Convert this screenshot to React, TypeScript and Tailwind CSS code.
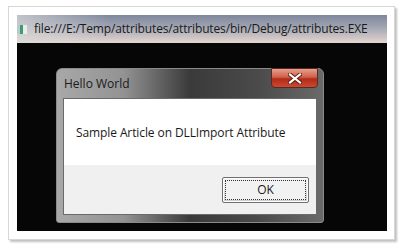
import React from "react";

export default function App() {
  const seg = { fontFamily: '"Open Sans", "Noto Sans", "Liberation Sans", sans-serif' };
  return (
    <div className="w-[403px] h-[249px] bg-white pt-[6px] pl-[8px]" style={seg}>
      <div className="w-[387px] h-[234px] border border-[#d6d6d6] bg-white pt-[8px] pl-[8px] shadow-[2px_2px_2px_rgba(0,0,0,0.25)]">
        <div className="w-[370px] h-[216px] flex flex-col bg-[#060606]">
          {/* console title bar */}
          <div className="h-[28px] flex items-center bg-[linear-gradient(to_bottom,#7d879c_0%,#a3a6b3_45%,#e4d6cf_100%)] relative">
            <div className="absolute inset-0 bg-[linear-gradient(to_right,rgba(220,220,220,0.7)_0%,rgba(220,220,220,0)_25%)]" />
            <div className="relative flex items-center">
              <div className="flex shrink-0 mt-[1px]">
                <div className="w-[3px] h-[9px] bg-[#b8c8d4]" />
                <div className="w-[3px] h-[9px] bg-[#3aa06a]" />
                <div className="w-[4px] h-[9px] bg-[#ececec]" />
              </div>
              <span className="ml-[7px] text-[12px] text-[#1a1a1a] tracking-[-0.15px] leading-none">
                file:///E:/Temp/attributes/attributes/bin/Debug/attributes.EXE
              </span>
            </div>
          </div>
          {/* console body */}
          <div className="flex-1 pl-[39px] pt-[25px]">
            <div className="w-[268px] h-[155px] rounded-t-[6px] rounded-b-[3px] border border-[#8a8a8a] bg-[linear-gradient(to_right,#a8a8a8_0%,#939393_25%,#3a3a3a_50%,#4a4a4a_75%,#6a6a6a_100%)] flex flex-col relative">
              {/* title */}
              <div className="h-[29px] flex items-start relative">
                <span className="ml-[7px] mt-[9px] text-[12px] text-[#1a1a1a] leading-none">Hello World</span>
                <div className="absolute right-[5px] top-[-1px] w-[47px] h-[20px] rounded-b-[4px] border border-[#5a2a22] bg-[linear-gradient(to_bottom,#e8a08e_0%,#d0604a_45%,#b42a18_55%,#c84a30_100%)] flex items-center justify-center">
                  <svg width="14" height="11" viewBox="0 0 14 11">
                    <path d="M2 1.5 L12 9.5 M12 1.5 L2 9.5" stroke="#5a1a10" strokeWidth="4" strokeLinecap="square" />
                    <path d="M2 1.5 L12 9.5 M12 1.5 L2 9.5" stroke="#ffffff" strokeWidth="2.2" strokeLinecap="square" />
                  </svg>
                </div>
              </div>
              {/* client area */}
              <div className="mx-[6px] w-[254px] h-[117px] border border-[#6a6a6a] flex flex-col bg-white">
                <div className="flex-1 bg-white pl-[12px] pt-[20px]">
                  <span className="text-[12px] text-[#1a1a1a] leading-none tracking-[-0.1px]">Sample Article on DLLImport Attribute</span>
                </div>
                <div className="h-[49px] bg-[#f0f0f0] flex justify-end items-start pr-[7px] pt-[12px]">
                  <div className="w-[87px] h-[26px] border border-[#707070] rounded-[2px] bg-[linear-gradient(to_bottom,#f4f4f4_0%,#ebebeb_50%,#dddddd_51%,#cfcfcf_100%)] p-[2px] shadow-[inset_0_0_0_1px_#fcfcfc]">
                    <div className="w-full h-full border border-dotted border-[#333] flex items-center justify-center bg-[#f2f2f2]">
                      <span className="text-[12px] text-[#1a1a1a] leading-none">OK</span>
                    </div>
                  </div>
                </div>
              </div>
            </div>
          </div>
        </div>
      </div>
    </div>
  );
}
